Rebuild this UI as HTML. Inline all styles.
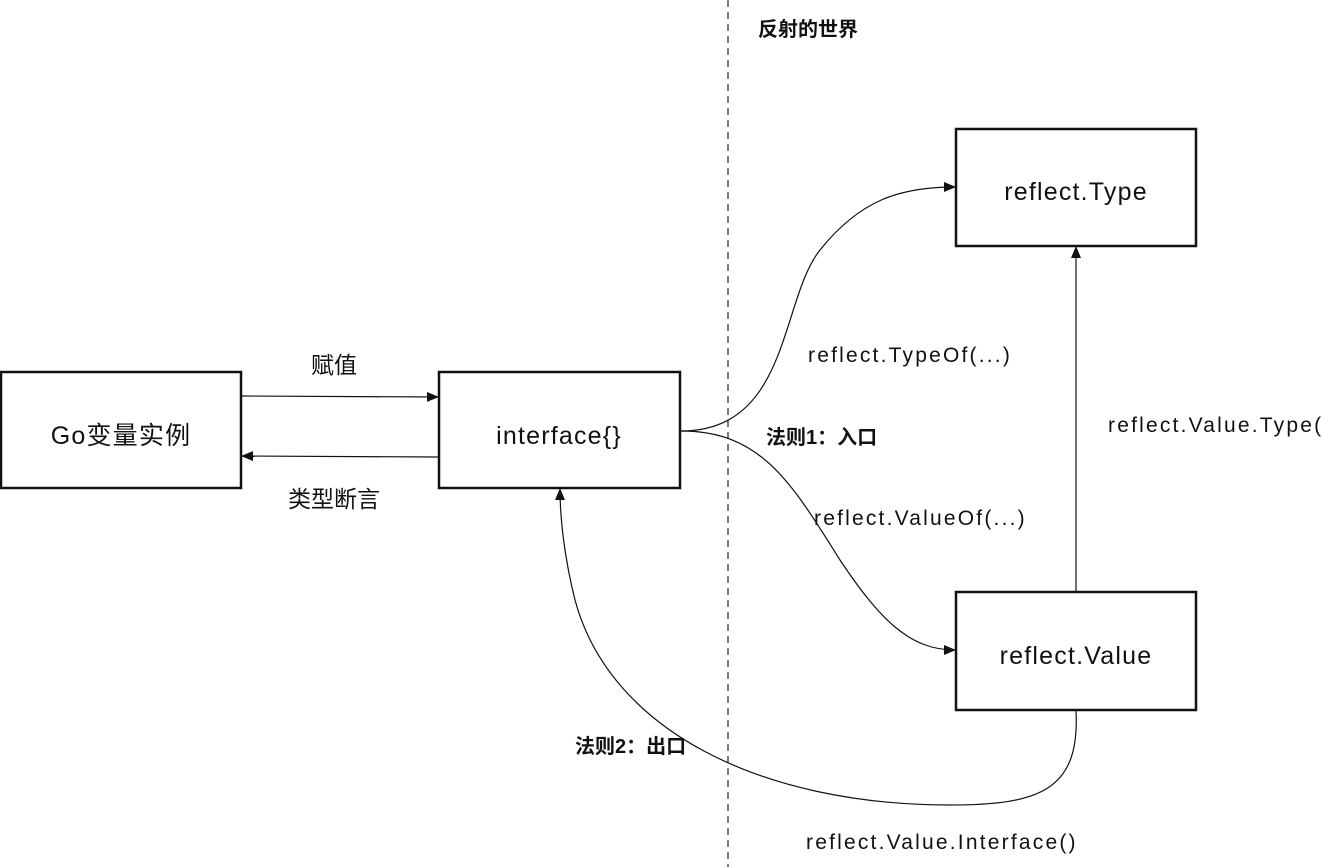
<!DOCTYPE html>
<html><head><meta charset="utf-8"><style>
body{margin:0;background:#fff;}
svg{display:block}
text{font-family:"Liberation Sans","Noto Sans CJK SC",sans-serif;fill:#111;}
</style></head><body>
<svg width="1322" height="867" viewBox="0 0 1322 867">
<defs><marker id="a" markerWidth="12" markerHeight="10" refX="11" refY="5" orient="auto" markerUnits="userSpaceOnUse"><path d="M0,0 L12,5 L0,10 Z" fill="#111"/></marker></defs>
<line x1="728" y1="0" x2="728" y2="867" stroke="#222" stroke-width="1.2" stroke-dasharray="7,5"/>
<g fill="none" stroke="#111" stroke-width="2.5">
<rect x="1" y="372" width="240" height="116"/>
<rect x="439" y="372" width="241" height="116"/>
<rect x="956" y="129" width="240" height="117"/>
<rect x="956" y="592" width="240" height="118"/>
</g>
<g fill="none" stroke="#111" stroke-width="1.2">
<line x1="242" y1="396" x2="438" y2="397" marker-end="url(#a)"/>
<line x1="438" y1="457" x2="242" y2="456" marker-end="url(#a)"/>
<path d="M681,431 C790,431 780,300 820,250 C860,200 900,187 955,187" marker-end="url(#a)"/>
<path d="M681,431 C760,431 790,480 840,560 C880,620 910,650 955,650" marker-end="url(#a)"/>
<line x1="1076" y1="591" x2="1076" y2="247" marker-end="url(#a)"/>
<path d="M1076,711 C1080,790 1040,805 950,805 C760,805 610,730 575,600 C565,560 560,520 560,489" marker-end="url(#a)"/>
</g>
<g font-size="25" text-anchor="middle" letter-spacing="1.2">
<text x="121" y="444">Go变量实例</text>
<text x="559" y="444">interface{}</text>
<text x="1076" y="200">reflect.Type</text>
<text x="1076" y="664">reflect.Value</text>
</g>
<g font-size="21" letter-spacing="2.2">
<text x="808" y="362">reflect.TypeOf(...)</text>
<text x="814" y="525">reflect.ValueOf(...)</text>
<text x="1108" y="432">reflect.Value.Type()</text>
<text x="806" y="849">reflect.Value.Interface()</text>
</g>
<g font-size="23">
<text x="311" y="373">赋值</text>
<text x="288" y="507">类型断言</text>
</g>
<g font-size="20" font-weight="bold">
<text x="758" y="36">反射的世界</text>
<text x="766" y="444">法则1：入口</text>
<text x="575" y="753">法则2：出口</text>
</g>
</svg>
</body></html>
